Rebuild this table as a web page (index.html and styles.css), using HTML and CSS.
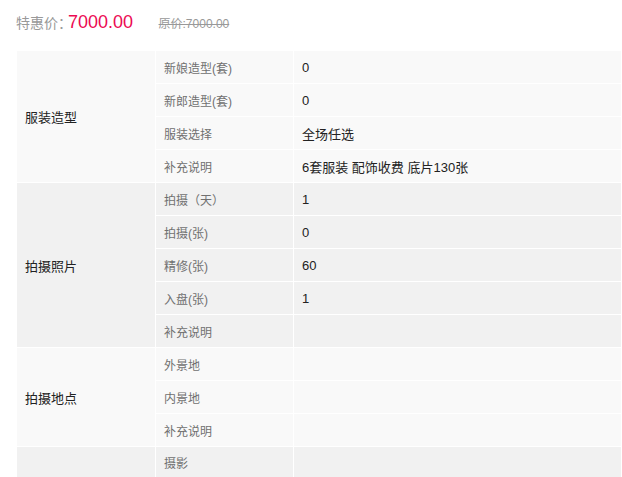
FILE: index.html
```html
<!DOCTYPE html>
<html lang="zh">
<head>
<meta charset="utf-8">
<title>套餐详情</title>
<link rel="stylesheet" href="styles.css">
</head>
<body>
<div class="price-bar">
  <span class="sale-label">特惠价：</span><span class="sale-value">7000.00</span>
  <span class="orig">原价:7000.00</span>
</div>
<table class="detail">
  <colgroup><col class="c1"><col class="c2"><col class="c3"></colgroup>
  <tbody class="g-light">
    <tr><th rowspan="4">服装造型</th><td class="k">新娘造型(套)</td><td class="v">0</td></tr>
    <tr><td class="k">新郎造型(套)</td><td class="v">0</td></tr>
    <tr><td class="k">服装选择</td><td class="v">全场任选</td></tr>
    <tr><td class="k">补充说明</td><td class="v">6套服装 配饰收费 底片130张</td></tr>
  </tbody>
  <tbody class="g-dark">
    <tr><th rowspan="5">拍摄照片</th><td class="k">拍摄（天）</td><td class="v">1</td></tr>
    <tr><td class="k">拍摄(张)</td><td class="v">0</td></tr>
    <tr><td class="k">精修(张)</td><td class="v">60</td></tr>
    <tr><td class="k">入盘(张)</td><td class="v">1</td></tr>
    <tr><td class="k">补充说明</td><td class="v"></td></tr>
  </tbody>
  <tbody class="g-light">
    <tr><th rowspan="3">拍摄地点</th><td class="k">外景地</td><td class="v"></td></tr>
    <tr><td class="k">内景地</td><td class="v"></td></tr>
    <tr><td class="k">补充说明</td><td class="v"></td></tr>
  </tbody>
  <tbody class="g-dark">
    <tr class="last"><th></th><td class="k">摄影</td><td class="v"></td></tr>
  </tbody>
</table>
</body>
</html>
```
FILE: styles.css
```css
html, body {
  margin: 0;
  padding: 0;
  background: #fff;
}
body {
  font-family: "Liberation Sans", Arial, "Noto Sans CJK SC", sans-serif;
  color: #333;
  padding-left: 17px;
  height: 477px;
  overflow: hidden;
  box-sizing: border-box;
}
.price-bar {
  height: 51px;
  box-sizing: border-box;
  padding-top: 12px;
  margin-left: -1px;
  white-space: nowrap;
}
.sale-label {
  font-size: 14px;
  color: #999;
  font-family: "Noto Sans CJK SC", sans-serif;
}
.sale-value {
  font-size: 18px;
  color: #ec0a52;
  margin-left: -4px;
}
.orig {
  font-size: 12px;
  color: #999;
  text-decoration: line-through;
  margin-left: 21px;
}
.detail {
  border-collapse: separate;
  border-spacing: 0;
  table-layout: fixed;
  width: 605px;
}
.c1 { width: 139px; }
.c2 { width: 138px; }
.detail th, .detail td {
  height: 33px;
  box-sizing: border-box;
  padding: 0 0 0 8px;
  border-right: 1px solid #fff;
  border-bottom: 1px solid #fff;
  text-align: left;
  vertical-align: middle;
  white-space: nowrap;
}
.detail tr.last th, .detail tr.last td {
  height: 30px;
  border-bottom: 0;
}
.detail th {
  font-weight: normal;
  font-size: 13px;
  color: #222;
}
.detail td.k {
  font-size: 12px;
  color: #707070;
}
.detail td.v {
  font-size: 13px;
  color: #222;
}
.g-light th, .g-light td { background: #f9f9f9; }
.g-dark th, .g-dark td { background: #f1f1f1; }
```
